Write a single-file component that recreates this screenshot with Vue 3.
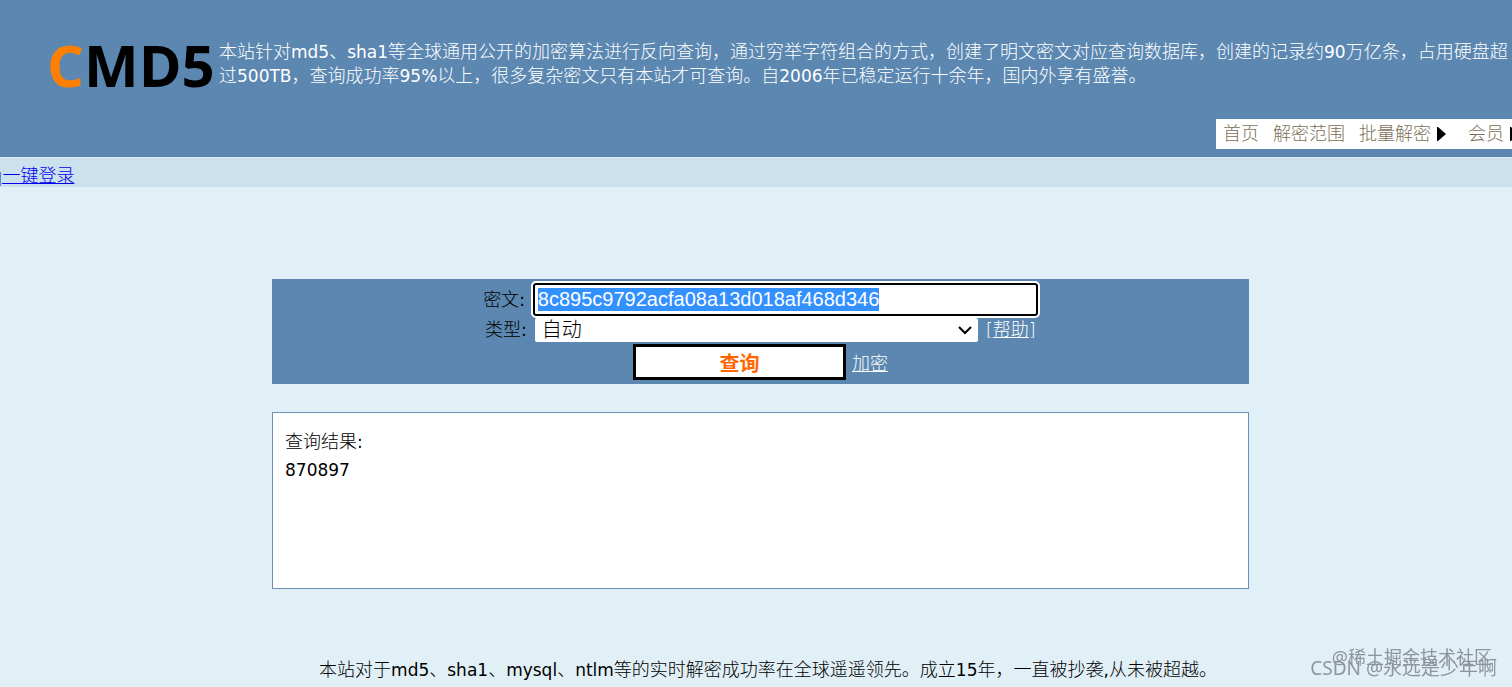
<template>
  <div class="page">
    <header class="header">
      <div class="intro">
        <a class="logo" href="#"><span class="logo-c">C</span><span>MD5</span></a>
        <p class="intro-text">
          本站针对<span class="en">md5</span>、<span class="en">sha1</span>等全球通用公开的加密算法进行反向查询，通过穷举字符组合的方式，创建了明文密文对应查询数据库，创建的记录约<span class="en">90</span>万亿条，占用硬盘超过<span class="en">500TB</span>，查询成功率<span class="en">95%</span>以上，很多复杂密文只有本站才可查询。自<span class="en">2006</span>年已稳定运行十余年，国内外享有盛誉。
        </p>
      </div>
      <nav class="nav">
        <a v-for="item in menu" :key="item.text" href="#" class="nav-item">
          {{ item.text }}
          <svg v-if="item.sub" class="arrow" width="9" height="14" viewBox="0 0 9 14">
            <path d="M0 0H1L9 7L1 14H0Z" />
          </svg>
        </a>
      </nav>
    </header>

    <div class="login-bar">
      <a class="login-link" href="#">q一键登录</a>
    </div>

    <main class="main">
      <form class="query" @submit.prevent>
        <div class="row">
          <label for="hash">密文<span class="en">:</span></label>
          <input id="hash" ref="hashInput" v-model="hash" class="hash" type="text" spellcheck="false" />
        </div>
        <div class="row row-type">
          <label for="type">类型<span class="en">:</span></label>
          <div class="select-wrap">
            <select id="type" v-model="type" class="type">
              <option value="auto">自动</option>
              <option value="md5">md5</option>
              <option value="sha1">sha1</option>
            </select>
            <svg class="chevron" width="14" height="10" viewBox="0 0 14 10">
              <path d="M1 2L7 8L13 2" fill="none" stroke="#000" stroke-width="2" />
            </svg>
          </div>
          <span class="help">[<a href="#">帮助</a>]</span>
        </div>
        <div class="row row-submit">
          <button class="submit" type="submit">查询</button>
          <a class="encrypt" href="#">加密</a>
        </div>
      </form>

      <section class="result">
        <div>查询结果<span class="en">:</span></div>
        <div class="en">870897</div>
      </section>
    </main>

    <footer class="footer">
      本站对于<span class="en">md5</span>、<span class="en">sha1</span>、<span class="en">mysql</span>、<span class="en">ntlm</span>等的实时解密成功率在全球遥遥领先。成立<span class="en">15</span>年，一直被抄袭<span class="en">,</span>从未被超越。
    </footer>

    <div class="mark mark-site">@稀土掘金技术社区</div>
    <div class="mark mark-author">CSDN @永远是少年啊</div>
  </div>
</template>

<script setup>
import { ref, onMounted } from 'vue'

const menu = [
  { text: '首页' },
  { text: '解密范围' },
  { text: '批量解密', sub: true },
  { text: '会员', sub: true }
]

const hash = ref('8c895c9792acfa08a13d018af468d346')
const type = ref('auto')
const hashInput = ref(null)

onMounted(() => {
  hashInput.value.focus()
  hashInput.value.select()
})
</script>

<style>
body {
  margin: 0;
  background: #e1eff6;
}
</style>

<style scoped>
.page {
  overflow: hidden;
  font-family: "DejaVu Sans", "Noto Sans CJK SC", sans-serif;
  font-size: 18px;
  line-height: 24px;
  font-weight: 300;
  color: #000;
}

.en {
  font-size: 17px;
  font-weight: 400;
}

.header {
  height: 157px;
  box-sizing: border-box;
  padding-top: 36px;
  background: #5b87b1;
  border-bottom: 1px solid #5580aa;
}

.intro {
  display: flex;
  height: 83px;
  padding-left: 47px;
}

.logo {
  display: flex;
  flex: none;
  width: 172px;
  height: 58px;
  font-family: "Open Sans", sans-serif;
  font-size: 58px;
  line-height: 58px;
  font-weight: 700;
  color: #000;
  text-decoration: none;
}

.logo-c {
  width: 37px;
  color: #ff8000;
}

.intro-text {
  margin: 0;
  padding-top: 4px;
  color: #fff;
}

.nav {
  display: flex;
  gap: 14px;
  width: 289px;
  height: 30px;
  margin-left: auto;
  padding-left: 7px;
  line-height: 30px;
  background: #fff;
}

.nav-item {
  display: flex;
  flex: none;
  align-items: center;
  gap: 6px;
  color: #7c6f57;
  text-decoration: none;
}

.nav-item:nth-child(4) {
  margin-left: 8px;
}

.arrow {
  fill: #000;
}

.login-bar {
  height: 29px;
  margin-top: 1px;
  line-height: 36px;
  background: #cbe1ed;
}

.login-link {
  margin-left: -9px;
  color: #0000ee;
}

.main {
  padding: 92px 263px 0 272px;
}

.query {
  padding: 4px 0;
  background: #5b87b1;
}

.row {
  display: flex;
  justify-content: center;
  align-items: center;
  gap: 8px;
}

.row a {
  color: #fff;
}

.hash {
  width: 505px;
  height: 33px;
  box-sizing: border-box;
  padding: 0 3px;
  border: 2px solid #000;
  border-radius: 3px;
  outline: 2px solid #fff;
  outline-offset: 0;
  background: #fff;
  font-family: "Liberation Sans", sans-serif;
  font-size: 20px;
}

.hash::selection {
  background: #3390ff;
  color: #fff;
}

.row-type {
  margin-top: 2px;
}

.select-wrap {
  position: relative;
  display: flex;
}

.type {
  width: 443px;
  height: 24px;
  padding: 0 7px;
  border: 0;
  border-radius: 2px;
  appearance: none;
  background: #fff;
  font-family: "Liberation Sans", "Noto Sans CJK SC", sans-serif;
  font-size: 20px;
  font-weight: 300;
  line-height: 24px;
  color: #000;
}

.chevron {
  position: absolute;
  right: 6px;
  top: 7px;
  pointer-events: none;
}

.help {
  color: #fff;
}

.row-submit {
  gap: 6px;
  margin-top: 2px;
}

.encrypt {
  padding-top: 4px;
}

.submit {
  width: 213px;
  height: 36px;
  padding: 0;
  border: 3px solid #000;
  background: #fff;
  font-family: "Liberation Sans", "Noto Sans CJK SC", sans-serif;
  font-size: 20px;
  font-weight: 700;
  color: #ff6600;
}

.result {
  min-height: 177px;
  box-sizing: border-box;
  margin-top: 28px;
  padding: 15px 12px;
  border: 1px solid #6a90b8;
  background: #fff;
  line-height: 28px;
}

.footer {
  margin-top: 69px;
  padding-left: 24px;
  text-align: center;
}

.mark {
  position: fixed;
  font-family: "Noto Sans", "Noto Sans CJK SC", sans-serif;
  font-size: 18px;
  font-weight: 400;
  color: #8d959b;
  white-space: nowrap;
}

.mark-site {
  right: 20px;
  bottom: 18px;
}

.mark-author {
  right: 15px;
  bottom: 7px;
  font-size: 19px;
}
</style>
